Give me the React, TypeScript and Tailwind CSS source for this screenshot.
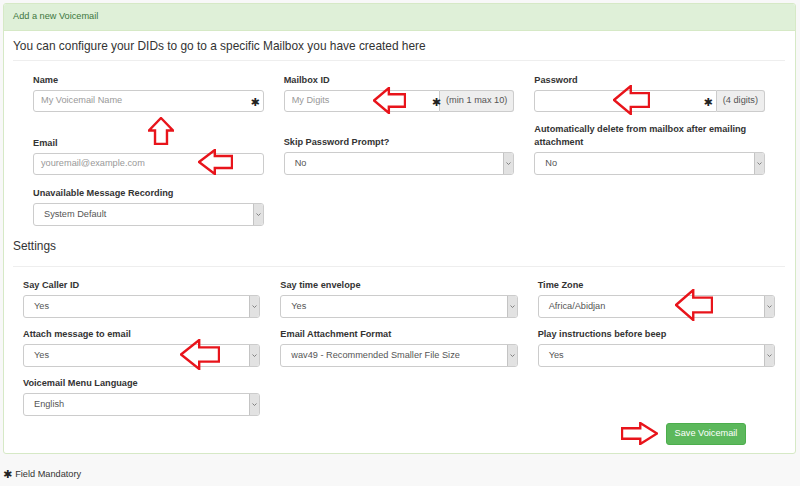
import React from "react";

type Dir = "left" | "right" | "up";

function arrowPath(dir: Dir, w: number, h: number) {
  if (dir === "up") {
    const hb = h * 0.48;
    const s1 = w * 0.27;
    const s2 = w * 0.73;
    return `M${w / 2} 1 L${w - 1} ${hb} L${s2} ${hb} L${s2} ${h - 1} L${s1} ${h - 1} L${s1} ${hb} L1 ${hb} Z`;
  }
  const hb = w * 0.48;
  const s1 = h * 0.27;
  const s2 = h * 0.73;
  const p = `M1 ${h / 2} L${hb} 1 L${hb} ${s1} L${w - 1} ${s1} L${w - 1} ${s2} L${hb} ${s2} L${hb} ${h - 1} Z`;
  return p;
}

function Arrow({ dir, x, y, w, h }: { dir: Dir; x: number; y: number; w: number; h: number }) {
  return (
    <svg
      width={w}
      height={h}
      viewBox={`0 0 ${w} ${h}`}
      className="absolute pointer-events-none"
      style={{ left: x, top: y, transform: dir === "right" ? "scaleX(-1)" : undefined }}
    >
      <path d={arrowPath(dir, w, h)} fill="none" stroke="#e8141b" strokeWidth={2.4} strokeLinejoin="miter" />
    </svg>
  );
}

function Star({ className = "" }: { className?: string }) {
  return <span className={`font-['DejaVu_Sans',sans-serif] text-[11px] leading-none text-[#222] ${className}`}>✱</span>;
}

function Label({ children }: { children: React.ReactNode }) {
  return <label className="block font-bold text-[9.2px] leading-[13px] mb-[3px] text-[#333]">{children}</label>;
}

function TextInput({ placeholder, star, starRight = 6, className = "rounded-[3px]" }: { placeholder?: string; star?: boolean; starRight?: number; className?: string }) {
  return (
    <div className={`relative flex-1 h-[22px] border border-[#ccc] bg-white ${className}`}>
      <div className="h-full flex items-center pl-[7px] text-[9.2px] text-[#999]">{placeholder}</div>
      {star && (
        <span className="absolute top-1/2 -translate-y-1/2" style={{ right: starRight }}>
          <Star />
        </span>
      )}
    </div>
  );
}

function Select({ value }: { value: string }) {
  return (
    <div className="h-[23px] flex border border-[#ccc] rounded-[3px] bg-white overflow-hidden">
      <div className="flex-1 flex items-center pl-[10px] text-[9.2px] text-[#555]">{value}</div>
      <div className="w-[10px] flex items-center justify-center bg-[#e2e2e2] border-l border-[#c4c4c4]">
        <svg width="5" height="3" viewBox="0 0 5 3">
          <path d="M0.5 0.5 L2.5 2.5 L4.5 0.5" fill="none" stroke="#777" strokeWidth="0.9" />
        </svg>
      </div>
    </div>
  );
}

function Addon({ children }: { children: React.ReactNode }) {
  return (
    <div className="h-[22px] flex items-center px-[6px] bg-[#eee] border border-l-0 border-[#ccc] rounded-r-[3px] text-[9.2px] text-[#555] whitespace-nowrap">
      {children}
    </div>
  );
}

export default function App() {
  return (
    <div className="relative w-[800px] min-h-[486px] bg-[#f8f8f8] pt-[3px] pl-[3px] pr-[4px] font-['Liberation_Sans',Arial,sans-serif] text-[#333]">
      <div className="bg-white border border-[#d6e9c6] rounded-[3px]">
        <div className="h-[27px] flex items-center pl-[9px] bg-[#dff0d8] border-b border-[#d6e9c6] text-[9.2px] text-[#3c763d] rounded-t-[2px]">
          Add a new Voicemail
        </div>
        <div className="pt-[7px] pl-[9px] pr-[10px] pb-[8px]">
          <h4 className="text-[11.9px] leading-[16px] text-[#333]">You can configure your DIDs to go to a specific Mailbox you have created here</h4>
          <hr className="mt-[6px] border-[#eee]" />

          <div className="px-[20px]">
            <div className="grid grid-cols-3 gap-x-[20px] mt-[13px]">
              <div>
                <Label>Name</Label>
                <div className="flex">
                  <TextInput placeholder="My Voicemail Name" star starRight={3} />
                </div>
              </div>
              <div>
                <Label>Mailbox ID</Label>
                <div className="flex">
                  <TextInput placeholder="My Digits" star starRight={-2} className="rounded-l-[3px]" />
                  <Addon>(min 1 max 10)</Addon>
                </div>
              </div>
              <div>
                <Label>Password</Label>
                <div className="flex">
                  <TextInput star starRight={3} className="rounded-l-[3px]" />
                  <Addon>(4 digits)</Addon>
                </div>
              </div>
            </div>

            <div className="grid grid-cols-3 gap-x-[20px] mt-[11px] items-end">
              <div>
                <Label>Email</Label>
                <div className="flex">
                  <TextInput placeholder="youremail@example.com" />
                </div>
              </div>
              <div>
                <Label>Skip Password Prompt?</Label>
                <Select value="No" />
              </div>
              <div>
                <Label>Automatically delete from mailbox after emailing attachment</Label>
                <Select value="No" />
              </div>
            </div>

            <div className="grid grid-cols-3 gap-x-[20px] mt-[12px]">
              <div>
                <Label>Unavailable Message Recording</Label>
                <Select value="System Default" />
              </div>
            </div>
          </div>

          <h4 className="mt-[12px] text-[11.9px] leading-[16px] text-[#333]">Settings</h4>
          <hr className="mt-[12px] border-[#eee]" />

          <div className="px-[10px]">
            <div className="grid grid-cols-3 gap-x-[20px] mt-[12px]">
              <div>
                <Label>Say Caller ID</Label>
                <Select value="Yes" />
              </div>
              <div>
                <Label>Say time envelope</Label>
                <Select value="Yes" />
              </div>
              <div>
                <Label>Time Zone</Label>
                <Select value="Africa/Abidjan" />
              </div>
            </div>
            <div className="grid grid-cols-3 gap-x-[20px] mt-[10px]">
              <div>
                <Label>Attach message to email</Label>
                <Select value="Yes" />
              </div>
              <div>
                <Label>Email Attachment Format</Label>
                <Select value="wav49 - Recommended Smaller File Size" />
              </div>
              <div>
                <Label>Play instructions before beep</Label>
                <Select value="Yes" />
              </div>
            </div>
            <div className="grid grid-cols-3 gap-x-[20px] mt-[10px]">
              <div>
                <Label>Voicemail Menu Language</Label>
                <Select value="English" />
              </div>
            </div>
          </div>

          <div className="flex justify-end pr-[39px] mt-[7px]">
            <button className="w-[80px] h-[22px] bg-[#5cb85c] border border-[#4cae4c] rounded-[3px] text-white text-[9.2px]">
              Save Voicemail
            </button>
          </div>
        </div>
      </div>

      <div className="mt-[14px] flex items-center gap-[3px] text-[9.2px] leading-[13px] text-[#333]">
        <Star />
        <span>Field Mandatory</span>
      </div>

      <Arrow dir="up" x={148} y={117} w={26} h={28} />
      <Arrow dir="left" x={373} y={87} w={33} h={27} />
      <Arrow dir="left" x={613} y={85} w={37} h={30} />
      <Arrow dir="left" x={198} y={149} w={35} h={26} />
      <Arrow dir="left" x={675} y={289} w={38} h={32} />
      <Arrow dir="left" x={180} y={339} w={40} h={31} />
      <Arrow dir="right" x={621} y={422} w={37} h={23} />
    </div>
  );
}
